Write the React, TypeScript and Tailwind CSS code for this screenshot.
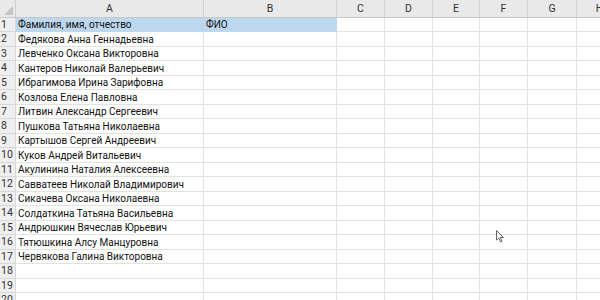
import React from "react";

const names = [
  "Фамилия, имя, отчество",
  "Федякова Анна Геннадьевна",
  "Левченко Оксана Викторовна",
  "Кантеров Николай Валерьевич",
  "Ибрагимова Ирина Зарифовна",
  "Козлова Елена Павловна",
  "Литвин Александр Сергеевич",
  "Пушкова Татьяна Николаевна",
  "Картышов Сергей Андреевич",
  "Куков Андрей Витальевич",
  "Акулинина Наталия Алексеевна",
  "Савватеев Николай Владимирович",
  "Сикачева Оксана Николаевна",
  "Солдаткина Татьяна Васильевна",
  "Андрюшкин Вячеслав Юрьевич",
  "Тятюшкина Алсу Манцуровна",
  "Червякова Галина Викторовна",
  "",
  "",
  "",
];

const cols = ["A", "B", "C", "D", "E", "F", "G", "H"];
const widths = ["w-[188px]", "w-[133px]", "w-[48px]", "w-[48px]", "w-[47px]", "w-[48px]", "w-[49px]", "w-[46px]"];

export default function App() {
  return (
    <div
      className="relative w-[600px] h-[300px] overflow-hidden bg-white text-[#222]"
      style={{ fontFamily: 'Roboto, "Noto Sans", sans-serif' }}
    >
      <div className="flex h-[18px] bg-[#e9e9e9] border-b border-[#c8c8c8]">
        <div className="relative w-[16px] shrink-0 border-r border-[#d0d0d0]">
          <div className="absolute right-[2px] bottom-[2px] w-0 h-0 border-l-[9px] border-l-transparent border-b-[9px] border-b-[#c4c4c4]" />
        </div>
        {cols.map((c, i) => (
          <div
            key={c}
            className={`${widths[i]} shrink-0 border-r border-[#d0d0d0] flex items-center justify-center text-[10.5px] text-[#333]`}
          >
            {c}
          </div>
        ))}
      </div>
      {names.map((n, r) => (
        <div key={r} className={`flex ${r % 2 === 0 ? "h-[14px]" : "h-[15px]"}`}>
          <div className="w-[16px] shrink-0 bg-[#efefef] border-r border-b border-[#d8d8d8] flex items-center pl-[1px] pt-[1px] text-[10.5px] text-[#333] leading-none">
            {r + 1}
          </div>
          {cols.map((c, i) => {
            const sel = r === 0 && i < 2;
            return (
              <div
                key={c}
                className={`${widths[i]} shrink-0 border-r border-b ${sel ? "bg-[#bdd7ee] border-[#bdd7ee]" : "border-[#e2e2e2]"} flex items-center pl-[2px] pt-[1px] text-[10px] leading-none whitespace-nowrap text-[#111]`}
              >
                {i === 0 ? n : r === 0 && i === 1 ? "ФИО" : ""}
              </div>
            );
          })}
        </div>
      ))}
      <svg className="absolute left-[496px] top-[230px]" width="9" height="13" viewBox="0 0 9 13">
        <path d="M0.5 0.5 L0.5 10 L2.8 8 L4.5 12 L6 11.3 L4.3 7.5 L7.5 7.5 Z" fill="#fff" stroke="#666" strokeWidth="1" />
      </svg>
    </div>
  );
}
